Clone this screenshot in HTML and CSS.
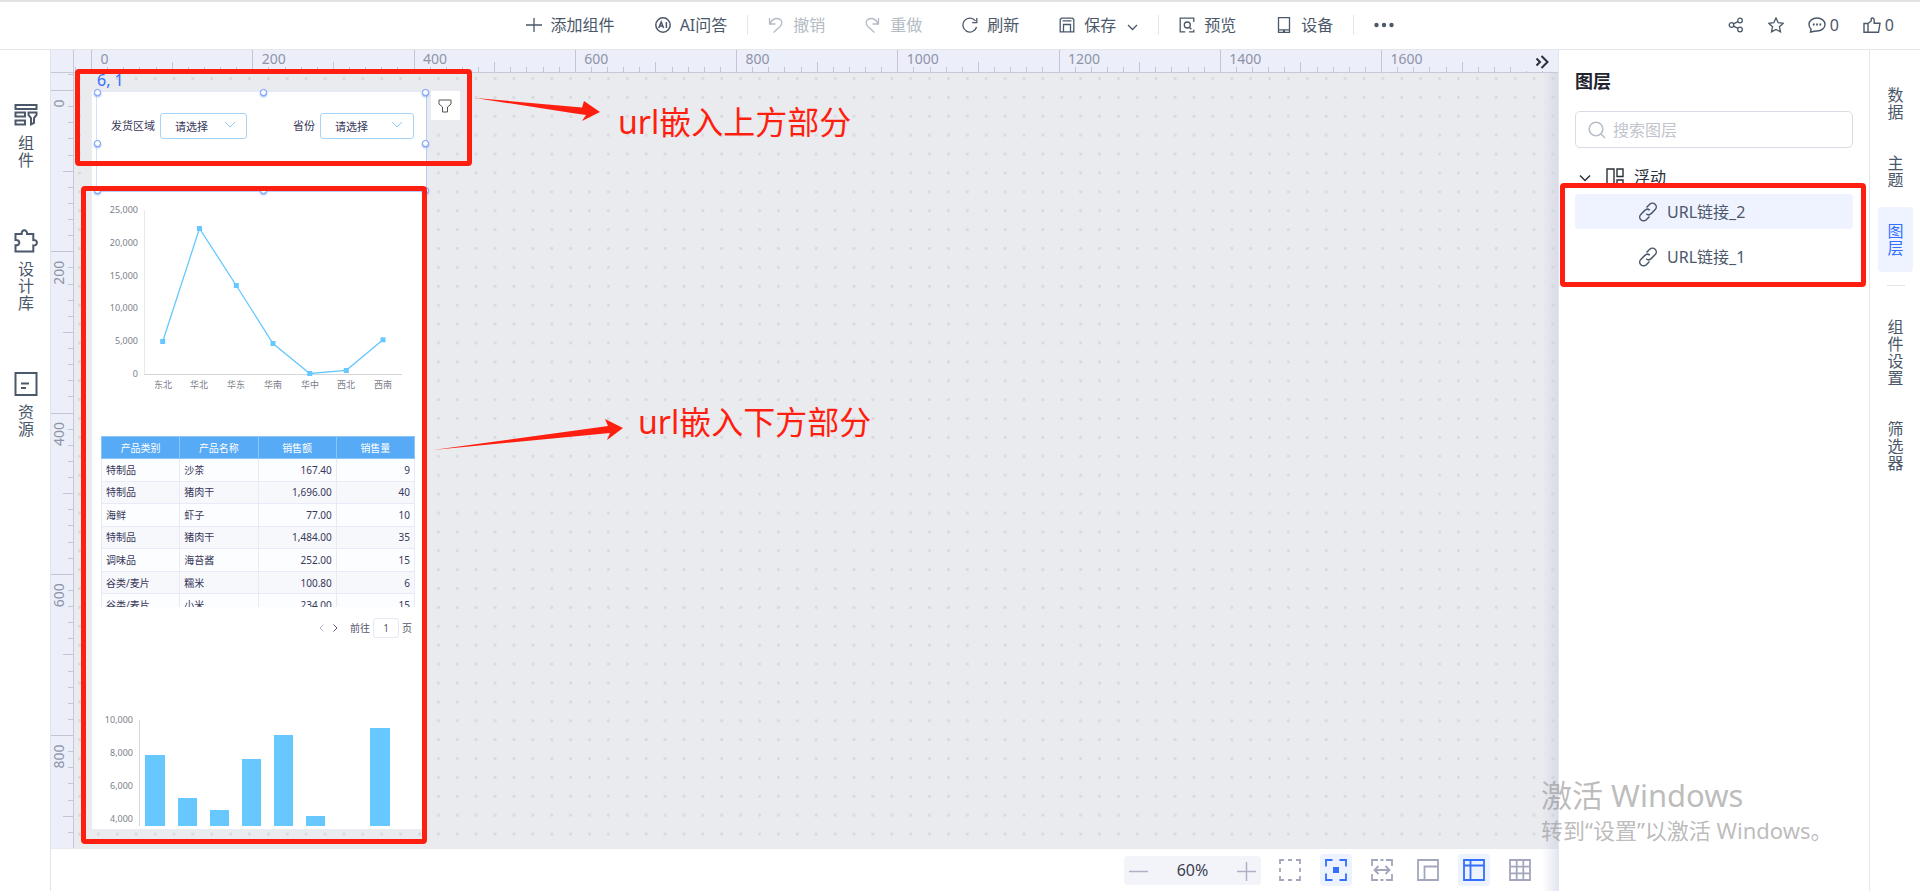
FILE: index.html
```html
<!DOCTYPE html>
<html lang="zh-CN">
<head>
<meta charset="utf-8">
<title>仪表板编辑器</title>
<link rel="stylesheet" href="styles.css">
</head>
<body>
<header class="topbar">
  <nav class="tools" aria-label="工具栏">
    <button class="tool"><svg class="ico" viewBox="0 0 16 16"><path d="M8 1v14M0 8h16"/></svg>添加组件</button>
    <button class="tool"><svg class="ico ico-bold" viewBox="0 0 16 16"><circle cx="8" cy="8" r="7.2"/><path d="M3.8 11l2.4-6 2.4 6M4.8 9h2.9M11.4 5v6"/></svg>AI问答</button>
    <span class="split"></span>
    <button class="tool" disabled><svg class="ico" viewBox="0 0 16 16"><path d="M1.5 1v6h6M1.8 6.6C3.500 3.500 6 1.500 9 1.500c3 0 4.800 1.800 4.800 4.200 0 1.600-.8 2.800-2 4L5.500 15.500"/></svg>撤销</button>
    <button class="tool" disabled><svg class="ico" viewBox="0 0 16 16"><path d="M13.500 1v6h-6M13.200 6.600C11.500 3.500 9 1.500 6 1.500c-3 0-4.800 1.800-4.800 4.200 0 1.600.8 2.800 2 4l6.300 5.800"/></svg>重做</button>
    <button class="tool"><svg class="ico" viewBox="0 0 16 16"><path d="M13.600 4A7 7 0 1 0 14.600 10M14.800 1v4.600h-4.600"/></svg>刷新</button>
    <button class="tool"><svg class="ico" viewBox="0 0 16 16"><path d="M2.500 1.200h11l1.300 1.300v12.300H1.200V2.500zM3.500 3.800h9M4.500 14.800V7.500h7v7.300"/></svg>保存<svg class="caret" viewBox="0 0 11 11"><path d="M1 4l4.500 4.500L10 4"/></svg></button>
    <span class="split"></span>
    <button class="tool"><svg class="ico" viewBox="0 0 16 16"><path d="M14.800 5V1.200H1.200v13.600h5M10 14.800h4.800v-2"/><circle cx="8.300" cy="8" r="3"/><path d="M10.400 10.200l2 2"/></svg>预览</button>
    <button class="tool"><svg class="ico" viewBox="0 0 16 16"><path d="M2.500.7h11v14.600h-11zM2.500 12.800h11M7 14h2"/></svg>设备</button>
    <span class="split"></span>
    <button class="tool" aria-label="更多"><svg class="more" viewBox="0 0 20 16"><circle cx="2.500" cy="8" r="2.200"/><circle cx="10" cy="8" r="2.200"/><circle cx="17.500" cy="8" r="2.200"/></svg></button>
  </nav>
  <div class="social">
    <button class="mini" aria-label="分享"><svg class="ico" viewBox="0 0 16 16"><circle cx="3.500" cy="8" r="2.300"/><circle cx="12" cy="3.500" r="2.300"/><circle cx="12" cy="12.500" r="2.300"/><path d="M5.500 6.900l4.500-2.300M5.500 9.100l4.500 2.300"/></svg></button>
    <button class="mini" aria-label="收藏"><svg class="ico" viewBox="0 0 16 16"><path d="M8 1l2.200 4.700 5 .6-3.700 3.500 1 5.100L8 12.400l-4.500 2.500 1-5.100L.8 6.300l5-.6z"/></svg></button>
    <button class="mini"><svg class="ico-lg" viewBox="0 0 18 16"><path d="M2.500 15l.6-2.800A6.600 6.600 0 0 1 1 7.500C1 3.800 4.500 1 9 1s8 2.800 8 6.500S13.500 14 9 14c-1 0-1.500 0-2.500.2z"/><path d="M4.800 7.500h1.800M8.100 7.500h1.800M11.400 7.500h1.800" stroke-width="2"/></svg>0</button>
    <button class="mini"><svg class="ico-lg" viewBox="0 0 18 16"><path d="M1 6.500h4v8.800H1zM5 6.500L8.200 4V1.500c0-.8 3-1 3 1.500v3.300H17l-1.500 9H5"/></svg>0</button>
  </div>
</header>

<main class="workspace">
  <aside class="left-rail">
    <button class="rail-item"><svg viewBox="0 0 24 24"><path d="M1.500 2h21v4h-21zM1.500 9.500h9.500v4h-9.500zM1.500 17.500h9.500v4h-9.500zM14.500 9.500h8v2.500l-2.500 3v5l-3 1.500v-6.500l-2.500-3z"/></svg><span>组件</span></button>
    <button class="rail-item"><svg viewBox="0 0 24 24"><path d="M1.500 5h6.200c-.6-5 5.800-4.700 5.400 0h6.200v6c5-.6 4.700 5.800 0 5.400v6.100H1.500v-6.200c5.200.6 5-6 0-5.300z"/></svg><span>设计库</span></button>
    <button class="rail-item"><svg viewBox="0 0 24 24"><path d="M1.500 1h21v22h-21zM7 11.500h8M7 16h5"/></svg><span>资源</span></button>
  </aside>

  <section class="stage">
    <div class="corner"></div>
    <div class="ruler ruler-x">
      <svg id="ruler-x"></svg>
      <button class="collapse" aria-label="收起"><svg viewBox="0 0 14 14"><path d="M1.500 3.500L5 7l-3.500 3.500M6.500 1L12.500 7l-6 6"/></svg></button>
    </div>
    <div class="ruler ruler-y"><svg id="ruler-y"></svg></div>

    <div class="canvas">
      <svg class="dots"><defs><pattern id="dot" x="4" y="4" width="18.890" height="18.890" patternUnits="userSpaceOnUse"><rect width="3" height="3" rx="1"/></pattern></defs><rect width="100%" height="100%" fill="url(#dot)"/></svg>

      <article class="page">
        <div class="filters">
          <label for="area">发货区域</label>
          <span class="pick"><select id="area"><option>请选择</option></select><svg viewBox="0 0 12 8"><path d="M1 1l5 5 5-5"/></svg></span>
          <label for="prov" class="second">省份</label>
          <span class="pick wide"><select id="prov"><option>请选择</option></select><svg viewBox="0 0 12 8"><path d="M1 1l5 5 5-5"/></svg></span>
        </div>

        <svg class="chart" viewBox="92 192 335 208" role="img" aria-label="折线图">
          <path class="axis-soft" d="M144.500 210v164"/><path class="axis" d="M144 374.500h258"/>
          <g class="ticks"><text x="138" y="213">25,000</text><text x="138" y="246">20,000</text><text x="138" y="279">15,000</text><text x="138" y="311">10,000</text><text x="138" y="344">5,000</text><text x="138" y="377">0</text></g>
          <g class="cats"><text x="163" y="388">东北</text><text x="199" y="388">华北</text><text x="236" y="388">华东</text><text x="273" y="388">华南</text><text x="310" y="388">华中</text><text x="346" y="388">西北</text><text x="383" y="388">西南</text></g>
          <polyline class="series" points="162.700,341.500 199.500,228.500 236.300,285.500 273,343.500 309.700,373.500 346.300,370.300 383,339.800"/>
          <g class="marks"><rect x="160.200" y="339" width="5" height="5"/><rect x="197" y="226" width="5" height="5"/><rect x="233.800" y="283" width="5" height="5"/><rect x="270.500" y="341" width="5" height="5"/><rect x="307.200" y="371" width="5" height="5"/><rect x="343.800" y="368" width="5" height="5"/><rect x="380.500" y="337.300" width="5" height="5"/></g>
        </svg>

        <div class="table-clip">
          <table class="sales">
            <thead><tr><th>产品类别</th><th>产品名称</th><th>销售额</th><th>销售量</th></tr></thead>
            <tbody>
              <tr><td>特制品</td><td>沙茶</td><td>167.40</td><td>9</td></tr>
              <tr><td>特制品</td><td>猪肉干</td><td>1,696.00</td><td>40</td></tr>
              <tr><td>海鲜</td><td>虾子</td><td>77.00</td><td>10</td></tr>
              <tr><td>特制品</td><td>猪肉干</td><td>1,484.00</td><td>35</td></tr>
              <tr><td>调味品</td><td>海苔酱</td><td>252.00</td><td>15</td></tr>
              <tr><td>谷类/麦片</td><td>糯米</td><td>100.80</td><td>6</td></tr>
              <tr><td>谷类/麦片</td><td>小米</td><td>234.00</td><td>15</td></tr>
            </tbody>
          </table>
        </div>

        <div class="pager">
          <button class="off" aria-label="上一页"><svg viewBox="0 0 5 8"><path d="M4.500.5L1 4l3.500 3.500"/></svg></button>
          <button aria-label="下一页"><svg viewBox="0 0 5 8"><path d="M.5.5L4 4 .5 7.500"/></svg></button>
          <label for="goto">前往</label><input id="goto" type="text" value="1"><span>页</span>
        </div>

        <svg class="chart bars-chart" viewBox="92 700 335 128" role="img" aria-label="柱状图">
          <path class="axis" d="M139.500 719v106"/>
          <g class="ticks"><text x="133" y="722">10,000</text><text x="133" y="755">8,000</text><text x="133" y="788">6,000</text><text x="133" y="821">4,000</text></g>
          <g class="marks"><path d="M145 825V754h20v71zM178 825V797h19v28zM210 825V809h19v16zM242 825V758h19v67zM274 825V734h19v91zM306 825V815h19v10zM370 825V727h20v98z"/></g>
        </svg>
      </article>

      <div class="selection">
        <span class="coords">6, 1</span>
        <i class="h tl"></i><i class="h tc"></i><i class="h tr"></i><i class="h ml"></i><i class="h mr"></i><i class="h bl"></i><i class="h bc"></i><i class="h br"></i>
        <button class="filter-btn" aria-label="筛选"><svg viewBox="0 0 14 14"><path d="M1 1h12v4L9.500 8v5h-5V8L1 5z"/></svg></button>
      </div>
    </div>

    <footer class="statusbar">
      <div class="zoom"><button aria-label="缩小"><svg viewBox="0 0 19 19"><path d="M0 9.500h19"/></svg></button><span>60%</span><button aria-label="放大"><svg viewBox="0 0 19 19"><path d="M0 9.500h19M9.500 0v19"/></svg></button></div>
      <div class="views">
        <button aria-label="框选"><svg viewBox="0 0 22 22"><path d="M1 5V1h4M9 1h4M17 1h4v4M21 9v4M21 17v4h-4M13 21H9M5 21H1v-4M1 13V9"/></svg></button>
        <button class="on" aria-label="居中"><svg viewBox="0 0 22 22"><path d="M1 7.500V1h6.500M14.500 1H21v6.500M21 14.500V21h-6.500M7.500 21H1v-6.500"/><path class="solid" d="M8 8h6v6H8z"/></svg></button>
        <button aria-label="适应宽度"><svg viewBox="0 0 22 22"><path d="M1 7V1h6M9.500 1h3M15 1h6v6M21 15v6h-6M12.500 21h-3M7 21H1v-6M4 11h14M7.500 7L3.500 11l4 4M14.500 7l4 4-4 4"/></svg></button>
        <button aria-label="画布"><svg viewBox="0 0 22 22"><path d="M1 1h20v20H1zM7.500 21V7.500H21"/></svg></button>
        <button class="on" aria-label="标尺"><svg viewBox="0 0 22 22"><path d="M1 1h20v20H1zM7.500 1v20M1 6.500h20"/></svg></button>
        <button aria-label="网格"><svg viewBox="0 0 22 22"><path d="M1 1h20v20H1zM7.700 1v20M14.300 1v20M1 7.700h20M1 14.300h20"/></svg></button>
      </div>
    </footer>
  </section>

  <aside class="layers">
    <h2>图层</h2>
    <label class="search"><svg viewBox="0 0 18 18"><circle cx="8" cy="8" r="6.800"/><path d="M13 13l4 4"/></svg><input type="text" placeholder="搜索图层" aria-label="搜索图层"></label>
    <div class="group"><svg class="twist" viewBox="0 0 12 12"><path d="M1 3.500l5 5 5-5"/></svg><svg class="float" viewBox="0 0 18 18"><path d="M1 1h7v16H1zM11 1h6v7.500h-6zM11 12h6v5h-6z"/></svg>浮动</div>
    <ul>
      <li class="current"><a href="#"><svg viewBox="0 0 20 20"><path d="M8.500 5.500l3.200-3.200a3.600 3.600 0 0 1 5.500 5.300l-4 4a3.600 3.600 0 0 1-5 .2M11.500 14.500l-3.200 3.200a3.600 3.600 0 0 1-5.500-5.300l4-4a3.600 3.600 0 0 1 5-.2"/></svg>URL链接_2</a></li>
      <li><a href="#"><svg viewBox="0 0 20 20"><path d="M8.500 5.500l3.200-3.200a3.600 3.600 0 0 1 5.500 5.300l-4 4a3.600 3.600 0 0 1-5 .2M11.500 14.500l-3.200 3.200a3.600 3.600 0 0 1-5.500-5.300l4-4a3.600 3.600 0 0 1 5-.2"/></svg>URL链接_1</a></li>
    </ul>
  </aside>

  <nav class="right-rail">
    <button class="tab"><span>数据</span></button>
    <button class="tab"><span>主题</span></button>
    <button class="tab active"><span>图层</span></button>
    <hr>
    <button class="tab"><span>组件设置</span></button>
    <button class="tab"><span>筛选器</span></button>
  </nav>
</main>

<div class="notes">
  <div class="frame frame-top"></div>
  <div class="frame frame-bottom"></div>
  <div class="frame frame-layers"></div>
  <svg class="arrow arrow-top" viewBox="0 0 126 24"><path d="M0 0L107 9.500 109 3l16 11-18 9 4-6L97 15z"/></svg>
  <svg class="arrow arrow-bottom" viewBox="0 0 191 32"><path d="M0 31L175 7l-3-7 18 9-16 12 3-7z"/></svg>
  <p class="note note-top">url嵌入上方部分</p>
  <p class="note note-bottom">url嵌入下方部分</p>
  <div class="activate"><p class="big">激活 Windows</p><p>转到“设置”以激活 Windows。</p></div>
</div>
<script src="rulers.js"></script>
</body>
</html>
```

FILE: styles.css
```css
* { box-sizing: border-box; }
body {
  margin: 0; height: 100vh; display: flex; flex-direction: column; position: relative; overflow: hidden;
  background: #fff; color: #4b586a;
  font: 16px/20px "Noto Sans", "Noto Sans CJK SC", sans-serif;
}
button { border: 0; padding: 0; background: none; color: inherit; font: inherit; }
svg { display: block; fill: none; stroke: currentColor; }
h2, p, ul { margin: 0; padding: 0; list-style: none; }
a { color: inherit; text-decoration: none; }

.topbar {
  height: 50px; flex: none; display: grid; grid-template-columns: 1fr auto 1fr; align-items: center; padding-bottom: 2px;
  border-top: 2px solid #e2e2e2; border-bottom: 1px solid #e6e7eb;
}
.tools { grid-column: 2; display: flex; align-items: center; }
.tool { display: flex; align-items: center; gap: 9px; padding: 0 20px; height: 32px; white-space: nowrap; }
.tool:disabled { color: #b3bbc4; }
.ico { width: 16px; height: 16px; stroke-width: 1.3; }
.ico-bold { stroke-width: 1.5; }
.caret { width: 11px; height: 11px; margin: 4px 0 0 2px; stroke-width: 1.3; }
.more { width: 20px; height: 16px; fill: #4b586a; stroke: none; }
.split { width: 1px; height: 20px; background: #e3e6ed; }
.social { display: flex; justify-content: flex-end; gap: 24px; padding-right: 26px; }
.mini { display: flex; align-items: center; gap: 4px; }
.ico-lg { width: 18px; height: 16px; stroke-width: 1.4; }

.workspace { flex: 1; min-height: 0; display: grid; grid-template-columns: 51px 1fr 311px 51px; }
.left-rail { border-right: 1px solid #e1e3ed; padding: 53px 0 0 2px; display: flex; flex-direction: column; align-items: center; gap: 60px; }
.rail-item { display: flex; flex-direction: column; align-items: center; gap: 8px; }
.rail-item svg { width: 24px; height: 24px; stroke-width: 2; }
.rail-item span { width: 16px; line-height: 17px; word-break: break-all; }

.stage { position: relative; min-width: 0; min-height: 0; display: grid; grid-template: 23px minmax(0, 1fr) 43px / 23px minmax(0, 1fr); }
.stage::after {
  content: ""; position: absolute; top: 23px; right: 0; bottom: 0; width: 16px; pointer-events: none;
  background: linear-gradient(to right, rgba(200, 206, 224, 0), rgba(200, 206, 224, .5));
}
.corner, .ruler { background: #eceef9; }
.corner, .ruler-x { border-bottom: 1px solid #c6c8d8; }
.corner, .ruler-y { border-right: 1px solid #c6c8d8; }
.ruler { position: relative; overflow: hidden; }
.ruler svg { width: 100%; height: 100%; }
.ruler path { stroke: #c3c5d6; shape-rendering: crispEdges; }
.ruler text { fill: #8f93a8; stroke: none; font-size: 14px; }
.collapse { position: absolute; right: 0; top: 0; width: 36px; height: 21px; padding: 2px 0 0 13px; background: #eceef9; color: #2b3038; }
.ruler .collapse svg { width: 14px; height: 14px; }
.ruler .collapse path { stroke: currentColor; stroke-width: 2; shape-rendering: auto; }

.canvas { position: relative; overflow: hidden; background: #eaebef; }
.dots { width: 100%; height: 100%; stroke: none; }
.dots pattern rect { fill: #d8dade; }
.page { position: absolute; left: 18px; top: 18px; width: 335px; background: #fff; color: #37375a; }
.filters { height: 101px; display: flex; align-items: flex-start; padding: 22px 13px 0 19px; font-size: 11px; line-height: 26px; }
.pick { position: relative; width: 87px; height: 26px; margin-left: 5px; }
.wide { width: 94px; }
.second { margin-left: auto; }
.pick select {
  display: block; width: 100%; height: 26px; padding: 0 14px; border: 1px solid #a6d3f8; border-radius: 3px;
  background: #fff; color: inherit; font: inherit; appearance: none;
}
.pick svg { position: absolute; right: 11px; top: 8px; width: 12px; height: 8px; color: #8ccaf7; }

.chart { width: 100%; }
.axis { stroke: #d4d6da; }
.axis-soft { stroke: #e9eaee; }
.chart text { fill: #7d7f89; stroke: none; font-size: 9px; }
.ticks { text-anchor: end; }
.cats { text-anchor: middle; }
.series { stroke: #66c8ff; stroke-width: 1.3; }
.marks { fill: #66c8ff; stroke: none; }

.table-clip { margin: 36px 12px 0 9px; height: 171px; overflow: hidden; }
.sales { width: 100%; height: 181px; table-layout: fixed; border-collapse: collapse; font-size: 10px; line-height: 16px; }
.sales th, .sales td { padding: 0 4px; border: 1px solid #e9e9f7; font-weight: 400; text-align: left; }
.sales th { height: 22px; background: #57aaf5; border-color: #8cc5f8; color: #fff; text-align: center; }
.sales td:nth-child(n+3) { text-align: right; }
.sales tbody tr { background: #fcfdff; }
.sales tbody tr:nth-child(even) { background: #f7f8fc; }
.pager { display: flex; justify-content: flex-end; align-items: center; margin-top: 11px; height: 20px; padding-right: 15px; font-size: 10px; color: #55566a; }
.pager svg { width: 5px; height: 8px; }
.pager button { margin-right: 9px; }
.pager .off { color: #b5b8c8; }
.pager label { margin: 0 3px; }
.pager input { width: 26px; height: 20px; margin-right: 3px; padding: 0; border: 1px solid #e6e8f2; border-radius: 3px; text-align: center; font: inherit; color: inherit; }
.bars-chart { margin-top: 63px; }

.selection { position: absolute; left: 22px; top: 18px; width: 331px; height: 101px; border: 1px solid #b9cbfa; border-top-color: #e3eafd; border-left-color: #d4e0fc; }
.coords { position: absolute; left: 0; top: -22px; color: #3370ff; white-space: nowrap; }
.h { position: absolute; width: 7px; height: 7px; border: 1px solid #7199f8; border-radius: 50%; background: #fff; box-shadow: 0 1px 2px #8eacf8; }
.tl, .tc, .tr { top: -3px; }
.ml, .mr { top: 48px; }
.bl, .bc, .br { bottom: -3px; }
.tl, .ml, .bl { left: -3px; }
.tc, .bc { left: 163px; }
.tr, .mr, .br { right: -3px; }
.filter-btn { position: absolute; left: 334px; top: -1px; width: 29px; height: 29px; padding: 7px; background: #fff; color: #555; }
.filter-btn svg { width: 14px; height: 14px; }

.statusbar { grid-column: 1 / -1; display: flex; justify-content: flex-end; align-items: center; gap: 13px; padding: 0 22px 0 0; border-top: 1px solid #e9eaee; }
.zoom { width: 137px; height: 29px; padding: 0 5px; display: flex; align-items: center; justify-content: space-between; background: #f3f4f9; border-radius: 4px; color: #3b4250; }
.zoom svg { width: 19px; height: 19px; color: #aeb0c6; stroke-width: 1.5; margin-top: 3px; }
.views { display: flex; gap: 14px; }
.views button { width: 32px; height: 32px; padding: 5px; border-radius: 4px; color: #a2a7be; }
.views svg { width: 22px; height: 22px; stroke-width: 1.8; }
.views .on { background: #edf2ff; color: #3370ff; }
.views .solid { fill: currentColor; stroke: none; }

.layers { border-left: 1px solid #e4e6ee; padding: 21px 16px 0; }
.layers h2 { font-size: 18px; line-height: 20px; color: #1f2430; }
.search { display: flex; align-items: center; gap: 7px; height: 37px; margin-top: 20px; padding: 0 12px; border: 1px solid #dadce5; border-radius: 5px; color: #b9bdca; }
.search svg { width: 18px; height: 18px; stroke-width: 1.6; }
.search input { flex: 1; min-width: 0; border: 0; padding: 0; outline: 0; font: inherit; color: #333; }
.search input::placeholder { color: #c1c4cd; }
.group { display: flex; align-items: center; height: 20px; margin-top: 19px; padding-left: 4px; color: #2a2f3a; }
.twist { width: 12px; height: 12px; margin: 2px 15px 0 0; stroke-width: 1.5; }
.float { width: 18px; height: 18px; margin-right: 10px; stroke-width: 1.4; }
.layers ul { display: flex; flex-direction: column; gap: 10px; margin-top: 7px; }
.layers a { display: flex; align-items: center; gap: 9px; height: 35px; padding-left: 63px; border-radius: 4px; }
.layers li svg { width: 20px; height: 20px; stroke-width: 1.5; }
.current a { background: #eff3ff; }

.right-rail { border-left: 1px solid #e4e6ee; padding: 21px 7px 0 8px; display: flex; flex-direction: column; gap: 3px; }
.tab { padding: 16px 0 15px; border-radius: 4px; display: flex; justify-content: center; }
.tab span { width: 16px; line-height: 17px; word-break: break-all; }
.active { background: #eff3ff; color: #3370ff; }
.right-rail hr { width: 18px; height: 1px; margin: 10px auto 14px; border: 0; background: #e2e4ea; }

.notes { position: absolute; inset: 0; pointer-events: none; color: #ff1f10; }
.frame { position: absolute; border: 5px solid #ff1f10; border-radius: 4px; }
.frame-top { left: 75px; top: 69px; width: 397px; height: 97px; }
.frame-bottom { left: 81px; top: 186px; width: 346px; height: 658px; }
.frame-layers { right: 54px; top: 183px; width: 306px; height: 104px; }
.arrow { position: absolute; fill: #ff1f10; stroke: none; }
.arrow-top { left: 475px; top: 98px; width: 126px; height: 24px; }
.arrow-bottom { left: 433px; top: 419px; width: 191px; height: 32px; }
.note { position: absolute; font-size: 32px; line-height: 40px; white-space: nowrap; }
.note-top { left: 618px; top: 102px; }
.note-bottom { left: 638px; top: 402px; }
.activate { position: absolute; right: 0; bottom: 45px; width: 379px; color: rgba(150, 150, 150, .65); font-size: 22px; line-height: 32px; }
.activate .big { font-size: 31px; line-height: 38px; }
```

FILE: rulers.js
```js
// Draws the ruler ticks and labels: one minor tick per 20 units.
const STEP = 16.125;
const ORIGIN = 17.5;

function draw(id, vertical) {
  const svg = document.getElementById(id);
  const box = svg.parentElement;
  const length = vertical ? box.clientHeight : box.clientWidth;
  let ticks = "";
  let labels = "";
  for (let i = -1; ORIGIN + i * STEP < length; i++) {
    const at = ORIGIN + i * STEP;
    const size = i % 10 === 0 ? 23 : i % 5 === 0 ? 11 : 6;
    ticks += vertical
      ? `M${23 - size} ${at}H23`
      : `M${at} ${23 - size}V23`;
    if (i % 10 === 0) {
      labels += vertical
        ? `<text transform="translate(13 ${at + 9}) rotate(-90)" text-anchor="end">${i * 20}</text>`
        : `<text x="${at + 9}" y="14">${i * 20}</text>`;
    }
  }
  svg.innerHTML = `<path d="${ticks}"/>${labels}`;
}

function drawAll() {
  draw("ruler-x", false);
  draw("ruler-y", true);
}

drawAll();
window.addEventListener("resize", drawAll);
```
